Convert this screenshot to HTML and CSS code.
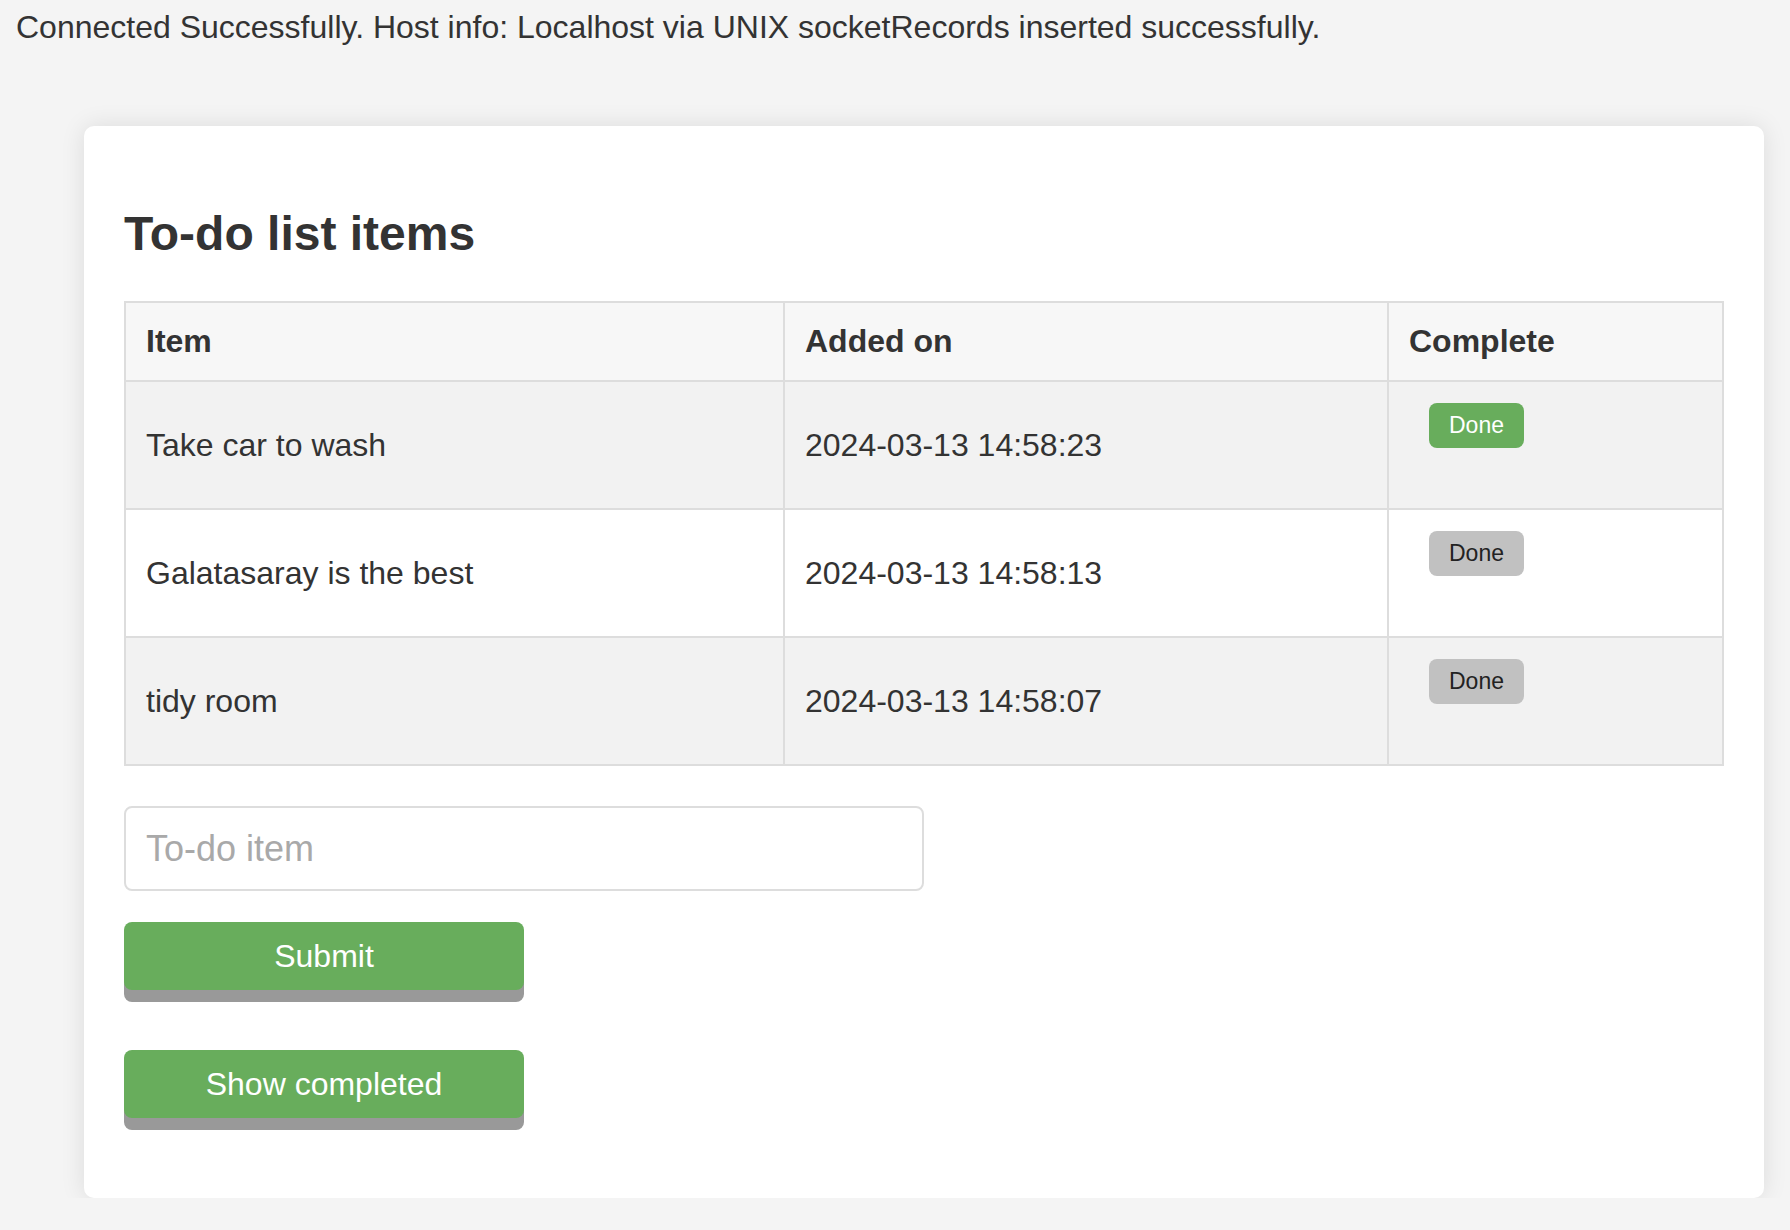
FILE: index.html
```html
<!DOCTYPE html>
<html lang="en">
<head>
<meta charset="utf-8">
<title>To-do list</title>
<link rel="stylesheet" href="styles.css">
</head>
<body>
<div class="status">Connected Successfully. Host info: Localhost via UNIX socketRecords inserted successfully.</div>
<div class="card">
  <h2 class="title">To-do list items</h2>
  <table class="todo-table">
    <colgroup>
      <col class="col-item">
      <col class="col-date">
      <col class="col-complete">
    </colgroup>
    <thead>
      <tr>
        <th>Item</th>
        <th>Added on</th>
        <th>Complete</th>
      </tr>
    </thead>
    <tbody>
      <tr class="odd">
        <td>Take car to wash</td>
        <td>2024-03-13 14:58:23</td>
        <td class="complete"><button class="done done-green">Done</button></td>
      </tr>
      <tr>
        <td>Galatasaray is the best</td>
        <td>2024-03-13 14:58:13</td>
        <td class="complete"><button class="done">Done</button></td>
      </tr>
      <tr class="odd">
        <td>tidy room</td>
        <td>2024-03-13 14:58:07</td>
        <td class="complete"><button class="done">Done</button></td>
      </tr>
    </tbody>
  </table>
  <input class="todo-input" type="text" placeholder="To-do item">
  <button class="action submit">Submit</button>
  <button class="action show">Show completed</button>
</div>
</body>
</html>
```
FILE: styles.css
```css
* {
  box-sizing: border-box;
}

html, body {
  margin: 0;
}

body {
  padding: 9px 16px 0;
  background: #f4f4f4;
  color: #333333;
  font-family: "Liberation Sans", Arial, Helvetica, sans-serif;
  font-size: 32px;
}

.status {
  line-height: normal;
}

.card {
  width: 1680px;
  margin: 80px 0 0 68px;
  padding: 40px;
  background: #ffffff;
  border-radius: 10px;
  box-shadow: 0 0 24px rgba(0, 0, 0, 0.1);
}

.title {
  margin: 40px 0 40px;
  font-size: 48px;
  font-weight: bold;
  line-height: normal;
  color: #333333;
}

.todo-table {
  width: 1598px;
  border-collapse: collapse;
  table-layout: fixed;
  border: 2px solid #dddddd;
}

.col-item {
  width: 659px;
}

.col-date {
  width: 604px;
}

.col-complete {
  width: 335px;
}

.todo-table th,
.todo-table td {
  border: 2px solid #dddddd;
  padding: 20px;
  text-align: left;
  line-height: normal;
  font-size: 32px;
  color: #333333;
}

.todo-table th {
  background: #f7f7f7;
  font-weight: bold;
}

.todo-table td {
  vertical-align: middle;
  background: #ffffff;
}

.todo-table tr.odd td {
  background: #f2f2f2;
}

.todo-table td.complete {
  vertical-align: top;
}

.done {
  display: block;
  margin: 1px 0 40px 20px;
  padding: 9px 20px;
  border: none;
  border-radius: 8px;
  background: #c1c1c1;
  color: #222222;
  font-family: "Liberation Sans", Arial, Helvetica, sans-serif;
  font-size: 23px;
  line-height: 27px;
}

.done-green {
  background: #68ad5c;
  color: #ffffff;
}

.todo-input {
  display: block;
  width: 800px;
  height: 85px;
  margin: 40px 0 0;
  padding: 0 20px;
  border: 2px solid #dddddd;
  border-radius: 8px;
  background: #ffffff;
  font-family: "Liberation Sans", Arial, Helvetica, sans-serif;
  font-size: 36px;
  color: #333333;
  outline: none;
}

.todo-input::placeholder {
  color: #a9a9a9;
}

.action {
  display: block;
  width: 400px;
  height: 68px;
  padding: 0;
  border: none;
  border-radius: 8px;
  background: #68ad5c;
  color: #ffffff;
  font-family: "Liberation Sans", Arial, Helvetica, sans-serif;
  font-size: 32px;
  line-height: 68px;
  text-align: center;
  box-shadow: 0 12px 0 #999999;
}

.submit {
  margin-top: 31px;
}

.show {
  margin-top: 60px;
  margin-bottom: 40px;
}
```
